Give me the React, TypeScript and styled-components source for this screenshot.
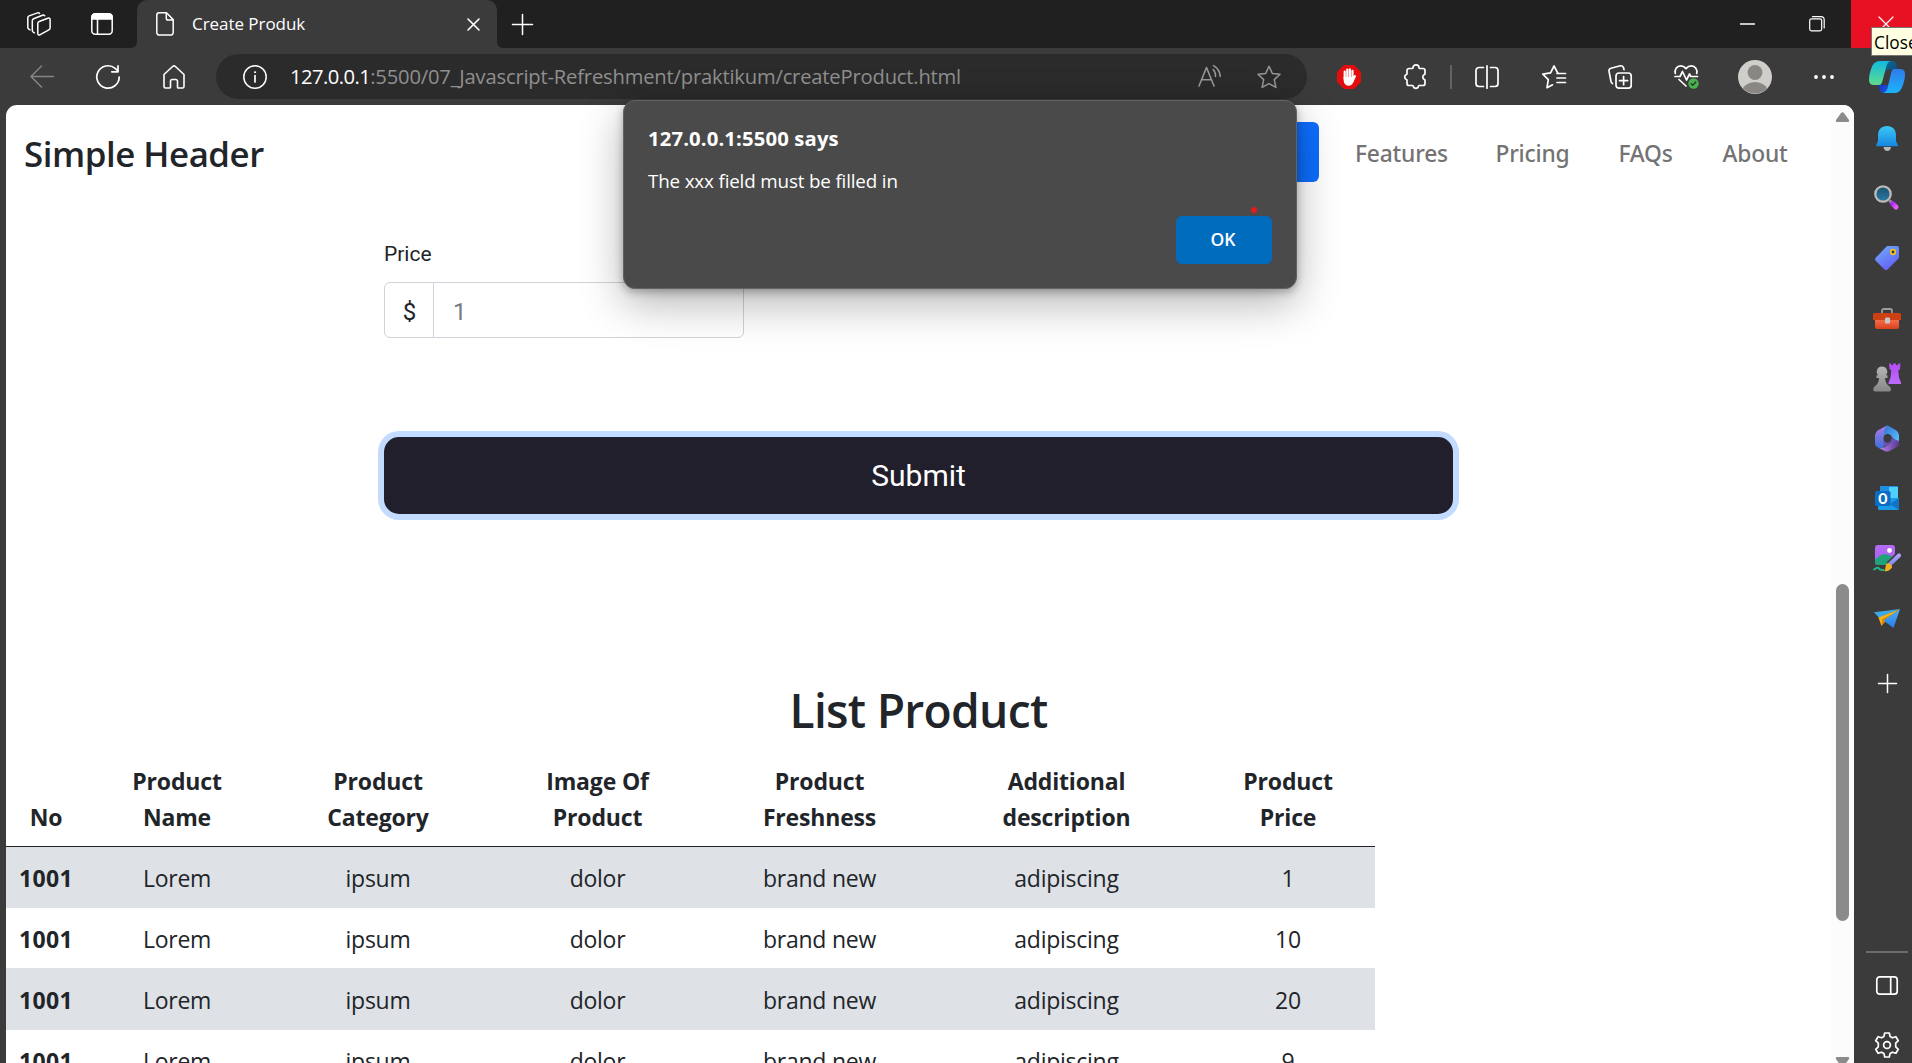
import React from "react";
import styled, { createGlobalStyle } from "styled-components";

const UI = `"Open Sans", "Noto Sans", sans-serif`;
const CHROME = "#3b3b3b";
const STRIP = "#202020";

const GlobalStyle = createGlobalStyle`
  *, *::before, *::after { box-sizing: border-box; }
  html, body { margin: 0; padding: 0; overflow: hidden; }
  body { font-family: ${UI}; background: ${CHROME}; }
  svg { display: block; flex: none; overflow: visible; }
`;

/* ---------- Browser frame ---------- */

const Window = styled.div`
  position: relative;
  display: flex;
  flex-direction: column;
  width: 1912px;
  height: 1063px;
  overflow: hidden;
  background: ${CHROME};
`;

const TabStrip = styled.div`
  display: flex;
  flex: none;
  height: 48px;
`;

const StripLead = styled.div`
  display: flex;
  align-items: center;
  width: 137px;
  padding-left: 27px;
  gap: 40px;
  background: ${STRIP};
  border-bottom-right-radius: 6px;
`;

const TabWell = styled.div`
  width: 360px;
  background: linear-gradient(${STRIP} 50%, ${CHROME} 50%);
`;

const Tab = styled.div`
  display: flex;
  align-items: center;
  height: 48px;
  padding: 0 17px 0 19px;
  border-radius: 10px 10px 0 0;
  background: ${CHROME};
`;

const TabTitle = styled.span`
  flex: 1;
  margin-left: 18px;
  padding-bottom: 2px;
  color: #fff;
  font-size: 17px;
  letter-spacing: -0.05px;
`;

const StripRest = styled.div`
  display: flex;
  flex: 1;
  align-items: center;
  justify-content: space-between;
  padding-left: 15px;
  background: ${STRIP};
  border-bottom-left-radius: 6px;
`;

const WindowControls = styled.div`
  display: flex;
  align-self: stretch;
`;

const ControlButton = styled.div<{ $w: number; $danger?: boolean }>`
  display: flex;
  align-items: center;
  justify-content: center;
  width: ${(p) => p.$w}px;
  padding-left: ${(p) => (p.$danger ? 8 : 0)}px;
  background: ${(p) => (p.$danger ? "#e81123" : "transparent")};
`;

const Tooltip = styled.div`
  position: absolute;
  z-index: 4;
  left: 1871px;
  top: 27px;
  width: 60px;
  height: 29px;
  padding-left: 2px;
  border: 1px solid #767676;
  background: #ffffe1;
  color: #000;
  font-size: 17.3px;
  line-height: 29px;
`;

const Body = styled.div`
  display: flex;
  flex: 1;
  min-height: 0;
`;

const Main = styled.div`
  display: flex;
  flex-direction: column;
  width: 1854px;
`;

const Toolbar = styled.div`
  display: flex;
  flex: none;
  align-items: center;
  height: 57px;
  padding: 0 0 0 9px;
`;

const Slot = styled.div<{ $w?: number; $pad?: number }>`
  display: flex;
  flex: none;
  align-items: center;
  justify-content: center;
  width: ${(p) => p.$w ?? 66}px;
  padding-left: ${(p) => p.$pad ?? 0}px;
`;

const AddressBar = styled.div`
  display: flex;
  align-items: center;
  width: 1091px;
  height: 45px;
  margin: 0 9px;
  padding: 0 26px 0 27px;
  border-radius: 23px;
  background: #2b2b2b;
`;

const Url = styled.div`
  flex: 1;
  margin-left: 23px;
  padding-bottom: 2px;
  color: #8f8f8f;
  font-size: 20.2px;
  letter-spacing: -0.19px;
  white-space: nowrap;
`;

const UrlHost = styled.span`
  color: #fff;
  letter-spacing: -0.55px;
`;

const BarActions = styled.div`
  display: flex;
  align-items: center;
  gap: 35px;
`;

const BarDivider = styled.div`
  flex: none;
  width: 2px;
  height: 24px;
  margin: 0 1px 0 2px;
  background: #636363;
`;

const Sidebar = styled.aside`
  display: flex;
  flex-direction: column;
  width: 58px;
  padding-left: 8px;
`;

const SideItem = styled.div<{ $h?: number; $mt?: number }>`
  display: flex;
  flex: none;
  align-items: center;
  justify-content: center;
  height: ${(p) => p.$h ?? 60}px;
  margin-top: ${(p) => p.$mt ?? 0}px;
`;

const SideRule = styled.div`
  flex: none;
  height: 2px;
  margin: 238px 4px 0 4px;
  background: #6b6b6b;
`;

/* ---------- Web page ---------- */

const Viewport = styled.div`
  display: flex;
  flex: 1;
  min-height: 0;
  margin-left: 6px;
  overflow: hidden;
  border-radius: 11px 11px 0 0;
  background: #fff;
`;

const Page = styled.main`
  display: flex;
  flex-direction: column;
  width: 1825px;
  color: #212529;
`;

const Scrollbar = styled.div`
  display: flex;
  flex-direction: column;
  align-items: center;
  width: 23px;
  padding-top: 7px;
  background: #fcfcfc;
`;

const Thumb = styled.div`
  flex: none;
  width: 13px;
  height: 337px;
  margin: 462px 0 136px;
  border-radius: 7px;
  background: #8b8b8b;
`;

const SiteHeader = styled.header`
  display: flex;
  flex: none;
  align-items: center;
  justify-content: space-between;
  height: 94px;
  padding: 0 18px;
`;

const Brand = styled.span`
  padding-top: 4px;
  font-size: 34.8px;
  font-weight: 600;
  letter-spacing: -0.45px;
  line-height: 54px;
`;

const Nav = styled.nav`
  display: flex;
  height: 60px;
`;

const NavPill = styled.div`
  width: 118px;
  height: 60px;
  margin-right: 13px;
  border-radius: 6px;
  background: #0d6efd;
`;

const NavLink = styled.a<{ $w: number }>`
  width: ${(p) => p.$w}px;
  color: #737373;
  font-family: "Noto Sans", sans-serif;
  font-size: 22.8px;
  font-weight: 500;
  letter-spacing: -0.2px;
  line-height: 64px;
  text-align: center;
`;

const Form = styled.form`
  display: flex;
  flex: none;
  flex-direction: column;
  align-items: flex-start;
  width: 1069px;
  margin: 40px auto 0;
  font-family: Roboto, sans-serif;
`;

const Label = styled.label`
  font-size: 21px;
  line-height: 31px;
`;

const InputGroup = styled.div`
  display: flex;
  width: 360px;
  height: 56px;
  margin-top: 12px;
  border: 1px solid #ced4da;
  border-radius: 6px;
  font-size: 24px;
  line-height: 59px;
`;

const Prefix = styled.span`
  width: 49px;
  padding-left: 1px;
  border-right: 1px solid #ced4da;
  text-align: center;
`;

const FieldValue = styled.span`
  padding-left: 19px;
  color: #757c84;
`;

const Submit = styled.button`
  width: 100%;
  height: 77px;
  margin-top: 99px;
  padding: 0;
  border: 0;
  border-radius: 15px;
  background: #211f2b;
  box-shadow: 0 0 0 6px #c2dbfe;
  color: #fff;
  font-family: Roboto, sans-serif;
  font-size: 30px;
`;

const Heading = styled.h2`
  flex: none;
  margin: 168px 0 11px;
  font-size: 46.2px;
  font-weight: 600;
  letter-spacing: -0.72px;
  line-height: 58px;
  text-align: center;
`;

const Table = styled.table`
  flex: none;
  width: 1369px;
  table-layout: fixed;
  border-collapse: separate;
  border-spacing: 0;
  font-size: 23px;
  line-height: 36px;
  text-align: center;
`;

const HeadCell = styled.th`
  padding: 12px 0 11px;
  border-bottom: 1px solid #212529;
  font-size: 23px;
  font-weight: 700;
  letter-spacing: -0.17px;
  vertical-align: bottom;
`;

const Row = styled.tr<{ $striped: boolean }>`
  height: 61px;
  background: ${(p) => (p.$striped ? "#dee1e6" : "#fff")};
`;

const Cell = styled.td<{ $strong?: boolean }>`
  padding: 2px 0 0;
  border-bottom: 1px solid #dee1e6;
  font-weight: ${(p) => (p.$strong ? 700 : 400)};
  letter-spacing: ${(p) => (p.$strong ? "0.4px" : "-0.25px")};
`;

/* ---------- Alert dialog ---------- */

const Dialog = styled.div`
  position: absolute;
  z-index: 3;
  left: 623px;
  top: 100px;
  display: flex;
  flex-direction: column;
  width: 674px;
  height: 189px;
  padding: 21px 24px 24px;
  border: 1px solid #636363;
  border-radius: 12px;
  background: #4a4a4a;
  box-shadow: 0 14px 44px rgba(0, 0, 0, 0.3), 0 3px 9px rgba(0, 0, 0, 0.28);
  color: #fff;
`;

const DialogTitle = styled.div`
  font-size: 20.3px;
  font-weight: 700;
  letter-spacing: 0.13px;
  line-height: 32px;
`;

const DialogText = styled.div`
  margin-top: 12px;
  font-size: 18.8px;
  letter-spacing: -0.15px;
  line-height: 30px;
`;

const DialogActions = styled.div`
  display: flex;
  justify-content: flex-end;
  margin-top: 20px;
`;

const OkButton = styled.button`
  position: relative;
  width: 96px;
  height: 48px;
  padding: 0 2px 2px 0;
  border: 0;
  border-radius: 6px;
  background: #006cbe;
  color: #fff;
  font-family: ${UI};
  font-size: 17.5px;
  font-weight: 600;
`;

const RecordDot = styled.i`
  position: absolute;
  left: 75px;
  top: -9px;
  width: 6px;
  height: 6px;
  border-radius: 50%;
  background: #e21b1b;
`;

/* ---------- Icons ---------- */

type IconProps = { w?: number; h?: number; color?: string; sw?: number; children: React.ReactNode };

const Line = ({ w = 24, h = 24, color = "#fff", sw = 1.5, children }: IconProps) => (
  <svg width={w} height={h} viewBox={`0 0 ${w} ${h}`} fill="none" stroke={color} strokeWidth={sw} strokeLinecap="round" strokeLinejoin="round">
    {children}
  </svg>
);

const Art = ({ w = 24, h = 24, children }: IconProps) => (
  <svg width={w} height={h} viewBox={`0 0 ${w} ${h}`}>
    {children}
  </svg>
);

const Grad = ({ id, from, to, x2 = "0", y2 = "1" }: { id: string; from: string; to: string; x2?: string; y2?: string }) => (
  <linearGradient id={id} x1="0" y1="0" x2={x2} y2={y2}>
    <stop offset="0" stopColor={from} />
    <stop offset="1" stopColor={to} />
  </linearGradient>
);

const WorkspacesIcon = () => (
  <Line>
    <path d="M12.2 9.500 20.800 6.200a1.500 1.500 0 0 1 2.300 1.500v8.200a2 2 0 0 1-1.300 1.900l-8.600 4.900a1.500 1.500 0 0 1-2.400-1.400v-9.900a2 2 0 0 1 1.400-1.900Z" />
    <path d="M7.400 20.800 6.300 20.200a2 2 0 0 1-1-1.800V8.700A2 2 0 0 1 6.600 6.800L15.500 3.200q1.300-.4 2.200.6" />
    <path d="M3 17.800 1.800 17.100a2 2 0 0 1-1-1.700V5.800A2 2 0 0 1 2.100 3.900L10.500.9q1.300-.4 2 .5" />
  </Line>
);

const VerticalTabsIcon = () => (
  <Line w={22} h={22}>
    <rect x="0.8" y="0.800" width="20.400" height="20.400" rx="3.500" />
    <path d="M1 6V4a3 3 0 0 1 3-3h14a3 3 0 0 1 3 3v2Z" fill="#fff" />
    <path d="M6.500 6v15" />
  </Line>
);

const DocIcon = () => (
  <Line w={18}>
    <path d="M3.300.8h7.200l6.700 6.800v13a2.500 2.500 0 0 1-2.500 2.500H3.300A2.500 2.500 0 0 1 .8 20.600V3.300A2.500 2.500 0 0 1 3.300.8Z" />
    <path d="M10.300 1v5.200a1.800 1.800 0 0 0 1.800 1.800H17" />
  </Line>
);

const CrossIcon = ({ s = 13, sw = 1.6 }: { s?: number; sw?: number }) => (
  <Line w={s} h={s} sw={sw}>
    <path d={`M1 1 ${s - 1} ${s - 1}M${s - 1} 1 1 ${s - 1}`} />
  </Line>
);

const PlusIcon = ({ s = 20, sw = 1.5 }: { s?: number; sw?: number }) => (
  <Line w={s} h={s} sw={sw}>
    <path d={`M${s / 2} .5V${s - 0.5}M.5 ${s / 2}H${s - 0.5}`} />
  </Line>
);

const BackIcon = () => (
  <Line color="#858585">
    <path d="M23.500 11.500H1M11.500 1 1 11.500 11.500 22" />
  </Line>
);

const ReloadIcon = () => (
  <Line sw={1.700}>
    <path d="M23.200 12a11.200 11.200 0 1 1-4-8.600L22 6.200" />
    <path d="M22 .8v6h-6.200" />
  </Line>
);

const HomeIcon = () => (
  <Line w={22} sw={1.600}>
    <path d="M1 9.500 9.600 1.500a2 2 0 0 1 2.800 0L21 9.500v12a1.500 1.500 0 0 1-1.500 1.500h-4.300a.7.7 0 0 1-.7-.7v-6a1.800 1.800 0 0 0-1.800-1.800h-3.400a1.800 1.800 0 0 0-1.800 1.800v6a.7.7 0 0 1-.7.7H2.500A1.500 1.500 0 0 1 1 21.500Z" />
  </Line>
);

const InfoIcon = () => (
  <Line>
    <circle cx="12" cy="12" r="11.200" />
    <path d="M12 10.500V17" strokeWidth="1.700" />
    <circle cx="12" cy="7.200" r="0.600" fill="#fff" strokeWidth="1" />
  </Line>
);

const ReadAloudIcon = () => (
  <Line color="#979797" sw={1.600}>
    <path d="M1 21 8.500 2.500 16 21M3.800 14.800h9.400" />
    <path d="M15.200 4.500a9 9 0 0 1 2.300 7M15.500.6a13 13 0 0 1 6.700 10.900" />
  </Line>
);

const STAR = "M12 1.200 15.300 8.400 23 9.300 17.300 14.600 18.900 22.400 12 18.600 5.100 22.400 6.700 14.600 1 9.300 8.700 8.400Z";

const StarIcon = () => (
  <Line color="#979797">
    <path d={STAR} />
  </Line>
);

const BlockerIcon = () => (
  <Art>
    <path d="M7 0h10l7 7v10l-7 7H7l-7-7V7Z" fill="#e40d0d" />
    <g stroke="#fff" strokeWidth="2.200" strokeLinecap="round" fill="none">
      <path d="M7.700 6.500V14M10.300 4.500V13M12.900 4.400V13M15.500 5.800V14M17.900 11.200 15.500 16" />
    </g>
    <path d="M6.600 12h10l.6 3q-1.500 5.700-5.200 5.700-4.600 0-5.300-4.700Z" fill="#fff" />
  </Art>
);

const PuzzleIcon = () => (
  <Line w={22} h={25} sw={1.700}>
    <path d="M5 4.500h3.300q.6 0 .7-.7a3 3 0 0 1 6 0q.1.700.7.7h3.300a2 2 0 0 1 2 2v3.200q0 .7-.7.700a3 3 0 0 0 0 5.200q.7 0 .7.700v3.200a2 2 0 0 1-2 2h-3.800q-.6 0-.7.700a2.700 2.700 0 0 1-5.300 0q-.1-.7-.7-.7H5a2 2 0 0 1-2-2v-3.200q0-.7-.6-.8a2.700 2.700 0 0 1 0-5q.6-.1.600-.8V6.500a2 2 0 0 1 2-2Z" />
  </Line>
);

const SplitIcon = () => (
  <Line sw={1.700}>
    <path d="M8.500 2.500H4A3 3 0 0 0 1 5.500v13a3 3 0 0 0 3 3h4.500M15.500 2.500H20a3 3 0 0 1 3 3v13a3 3 0 0 1-3 3h-4.500M12 .8v22.400" />
  </Line>
);

const FavoritesIcon = () => (
  <Line sw={1.700}>
    <path d="M15.800 8.200 12 1 8.600 7.900.8 9.200 6.300 14.600 5 22.700l5.500-2.900" />
    <path d="M15 8.500h8.500M15 13h8.500M15 17.500h8.500" />
  </Line>
);

const CollectionsIcon = () => (
  <Line sw={1.700}>
    <rect x="8" y="8" width="15.200" height="15.200" rx="3" />
    <path d="M15.600 11.500v8.200M11.500 15.600h8.200M4.500 18.500Q3.400 18 3 16.500L1 6.200Q.7 3.800 3 3.200L12.300.8q2.300-.3 3.200 1.800l.5 2" />
  </Line>
);

const EssentialsIcon = () => (
  <Line w={25} h={25} sw={1.700}>
    <path d="M1.300 9.500C.3 5.500 2.800 1.800 6.600 1.800q3.200 0 5.400 2.800 2.200-2.800 5.400-2.800c3.800 0 6.300 3.700 5.300 7.700" />
    <path d="M1 12.500h5l2.500-5 4 8.500 3-6 1.300 2.500h6.700M5 15.500l7 6.500" />
    <circle cx="19.500" cy="19.500" r="5.200" fill="#4caf50" stroke="none" />
    <path d="m17.200 19.800 1.600 1.500 3-3.300" stroke="#1f3d20" strokeWidth="1.300" />
  </Line>
);

const Avatar = () => (
  <Art w={34} h={34}>
    <clipPath id="avatarClip"><circle cx="17" cy="17" r="16.500" /></clipPath>
    <circle cx="17" cy="17" r="17" fill="#d0cecb" />
    <circle cx="17" cy="12.500" r="7.400" fill="#8a8683" />
    <ellipse cx="17" cy="32" rx="13" ry="10" fill="#8a8683" clipPath="url(#avatarClip)" />
  </Art>
);

const DotsIcon = () => (
  <Art w={20} h={4}>
    <circle cx="2" cy="2" r="1.900" fill="#fff" />
    <circle cx="10" cy="2" r="1.900" fill="#fff" />
    <circle cx="18" cy="2" r="1.900" fill="#fff" />
  </Art>
);

const RestoreIcon = () => (
  <Line w={16} h={16} sw={1.200}>
    <rect x="0.700" y="2.800" width="12" height="12" rx="1.800" />
    <path d="M3.500.7H12a3.200 3.200 0 0 1 3.200 3.200v8" />
  </Line>
);

const CopilotIcon = () => (
  <Art w={36} h={32}>
    <defs>
      <Grad id="copA" from="#12b9e0" to="#5fdc8c" />
      <Grad id="copB" from="#2f7bea" to="#1cb4fd" />
      <Grad id="copC" from="#0a6d94" to="#0c4a7c" x2="1" />
      <Grad id="copD" from="#1735c9" to="#1d56e0" x2="1" />
    </defs>
    <path d="M16 0h7.500q3 .3 4 4l1 4.500H22Q18 7.500 17 11Z" fill="url(#copC)" />
    <path d="M9 24h10l-1.500 6q-1 2-3 2-3 0-4-4.500Z" fill="url(#copD)" />
    <path d="M11 0h10.500Q18.500 1 17.500 5l-4.500 16.500q-.8 2.500-3.500 2.500H5Q0 24 0 19 0 12 3.500 4.500 6 0 11 0Z" fill="url(#copA)" />
    <path d="M25 8h6q5 0 5 5 0 7-3.500 14.500Q30 32 25.500 32H14.500q3-1 4-5L22.500 10.500Q23 8 25 8Z" fill="url(#copB)" />
  </Art>
);

const BellIcon = () => (
  <Art w={22} h={25}>
    <defs><Grad id="bell" from="#3cc8f6" to="#1687e0" /></defs>
    <path d="M7.500 21h7.500q-.5 4-3.700 4T7.500 21Z" fill="#b9b9b9" />
    <path d="M11 0c5.500 0 9 3.800 9 9v6l2 4.500q.2.700-.5.700H.5q-.7 0-.5-.7L2 15V9c0-5.200 3.500-9 9-9Z" fill="url(#bell)" />
  </Art>
);

const SearchIcon = () => (
  <Art w={27} h={27}>
    <defs>
      <Grad id="lens" from="#1b516f" to="#2a7ba5" />
      <Grad id="handle" from="#a72df0" to="#e95cfb" x2="1" />
    </defs>
    <path d="m15.500 15.500 2.500 2.500" stroke="#9a9a9a" strokeWidth="3" />
    <path d="m18.500 18.500 3.500 3.500" stroke="url(#handle)" strokeWidth="5" strokeLinecap="round" />
    <circle cx="9" cy="9" r="7.700" fill="url(#lens)" stroke="#bdbab7" strokeWidth="2.300" />
  </Art>
);

const TagIcon = () => (
  <Art>
    <defs><Grad id="tag" from="#6fb0fb" to="#6560f5" x2=".6" /></defs>
    <path d="M13 0h9q2 0 2 2v9q0 1-.7 1.700L12.500 23.500q-1.500 1.200-3 0L.7 14.800q-1.300-1.500 0-3L11.500.6Q12 0 13 0Z" fill="url(#tag)" />
    <circle cx="18" cy="6" r="2.300" fill="#3a3560" stroke="#f2c511" strokeWidth="1.700" />
  </Art>
);

const BriefcaseIcon = () => (
  <Art w={28} h={21}>
    <defs><Grad id="caseBody" from="#f9724f" to="#d9421c" /></defs>
    <path d="M9 6V3q0-2 2-2h6q2 0 2 2v3" fill="none" stroke="#9d9d9d" strokeWidth="1.800" />
    <path d="M2 11h24v8q0 2-2 2H4q-2 0-2-2Z" fill="url(#caseBody)" />
    <path d="M1.500 5h25q1.500 0 1.500 1.500V12H0V6.500Q0 5 1.500 5Z" fill="#cd4013" />
    <rect x="12" y="9.500" width="5" height="6" rx="1.200" fill="#c6c9cc" />
  </Art>
);

const ChessIcon = () => (
  <Art w={28} h={30}>
    <defs>
      <Grad id="rook" from="#b34cf5" to="#bb6cf8" />
      <Grad id="pawn" from="#b5b5b5" to="#878787" />
    </defs>
    <path d="M16 .5h2V2h2V.5h3V2h2V.5h2.500l-.5 5.500-1.700 1.500.7 7L28 19.500v1.500H15.500v-1.500l2-5 .8-7L16.600 6Z" fill="url(#rook)" />
    <path d="M9 3.500a5.200 5.200 0 0 1 3.800 8.800h1.700v2.700H12q.2 5 3.300 7.500 2.700 1.500 2.700 3.800 0 2.200-2 2.200H2.200Q.2 28.500.2 26.300q0-2.300 2.600-3.800Q6 20 6 15H3.500v-2.700h1.700A5.200 5.200 0 0 1 9 3.500Z" fill="url(#pawn)" />
  </Art>
);

const M365Icon = () => (
  <Art h={27}>
    <defs>
      <Grad id="mA" from="#b07be8" to="#3b6fd8" />
      <Grad id="mB" from="#2d6fd4" to="#5bc7f8" x2="1" />
      <Grad id="mC" from="#c187ee" to="#54378f" x2="1" y2="0" />
    </defs>
    <path d="M12.500.2 3 5.200Q0 7 0 10v8q0 3 3 4.500l3 1.500q3 0 3-3V9q0-3 2-5Z" fill="url(#mA)" />
    <path d="M12.500.2 21 5.200Q24 7 24 10v7q-1 0-4-2.500L15.500 12 8.500 10.500Q8.500 3.500 12.500.2Z" fill="url(#mB)" />
    <path d="M24 16v2q0 3-3 4.500L14 26.300q-2 .9-4 0L4 23q3 1 6-1l6.500-4.500Q21 14 24 16Z" fill="url(#mC)" />
    <path d="M16 10.500 20 14.700 24 16.800 24 17.500Q20 15.500 16 18.500L8.500 22V15Z" fill="#6a51b8" />
    <path d="m9.500 10 3-1.200 3.200 1.300 1.100 3.200-1.300 3.200-3 1.400-3-1.400-1.100-3Z" fill="#3b3b3b" />
  </Art>
);

const OutlookGlyph = styled.text`
  fill: #fff;
  font-family: Roboto, sans-serif;
  font-size: 14px;
  font-weight: 700;
`;

const OutlookIcon = () => (
  <Art>
    <rect x="5" y="0" width="18" height="12" rx="1" fill="#1e8fe0" />
    <rect x="14" y="1" width="9" height="11" fill="#50d0fa" />
    <path d="M3 12h21v10.500q0 1.500-1.500 1.500h-18Q3 24 3 22.500Z" fill="#1a9be8" />
    <path d="m24 12-9 6 9 6Z" fill="#1273c4" />
    <rect x="0" y="5" width="15.500" height="15" rx="1.500" fill="#0a6cc4" />
    <OutlookGlyph x="2.900" y="17.500">O</OutlookGlyph>
  </Art>
);

const ImageIcon = () => (
  <Art w={28} h={27}>
    <defs>
      <Grad id="pic" from="#b66af5" to="#a860ee" />
      <Grad id="brush" from="#a9a0f8" to="#7d8df0" />
    </defs>
    <rect x="2" y="0" width="20" height="20" rx="3" fill="url(#pic)" />
    <path d="M2 15q5-6 10-6 5 .5 8 4l-6 7H5q-3 0-3-3Z" fill="#1fa37a" />
    <circle cx="16.500" cy="5.500" r="2.400" fill="#fff" />
    <path d="m16 20 9.500-9.500" stroke="#3b3b3b" strokeWidth="7" />
    <path d="m17 19 9-8.500" stroke="url(#brush)" strokeWidth="4.200" strokeLinecap="round" />
    <path d="M15 18q4 .5 4 4.500-3 4.500-8 3.500 1.500-1 1.500-4 .5-3.500 2.500-4Z" fill="#f5b022" />
    <path d="M1 24.500q4-3 5-1t4.500 1.500" fill="none" stroke="#22b58a" strokeWidth="2" strokeLinecap="round" />
  </Art>
);

const PlaneIcon = () => (
  <Art w={27} h={19}>
    <defs><Grad id="plane" from="#4eb3f8" to="#2a7ae8" /></defs>
    <path d="M26 0 0 3.200l5 5.500Z" fill="#3ba9e8" />
    <path d="M26 0 4.500 8.500 7.500 17l3.200-6Z" fill="#f8b411" />
    <path d="M7.500 17 8.200 10 18 5Z" fill="#d88a06" />
    <path d="M26 0 9.500 11.500 19.500 19Z" fill="url(#plane)" />
  </Art>
);

const PanelIcon = () => (
  <Line w={22} h={19} sw={1.700}>
    <rect x="0.800" y="0.800" width="20.400" height="17.400" rx="3" />
    <path d="M14.700 1v17" />
  </Line>
);

const GearIcon = () => (
  <Line w={26} h={26} sw={1.700}>
    <circle cx="13" cy="13" r="3.400" />
    <path d="M10.700 1h4.600l.8 3.500 2.300 1.300 3.500-1.100 2.400 4-2.600 2.500v3.600l2.600 2.500-2.400 4-3.500-1.100-2.300 1.300-.8 3.500h-4.600l-.8-3.500-2.300-1.300-3.500 1.100-2.400-4 2.600-2.500v-3.600L1.700 8.700l2.400-4 3.500 1.100 2.300-1.300Z" />
  </Line>
);

const ArrowUp = () => (
  <Art w={15} h={10}>
    <path d="M6 .9q1.500-1.300 3 0l5 7.200q.8 1.900-1 1.900H2Q.2 10 1 8.100Z" fill="#8b8b8b" />
  </Art>
);

const ArrowDown = () => (
  <Art w={15} h={10}>
    <path d="M6 9.100q1.500 1.300 3 0l5-7.200q.8-1.900-1-1.900H2Q.2 0 1 1.900Z" fill="#8b8b8b" />
  </Art>
);

/* ---------- Data ---------- */

const columns = [
  { label: ["No"], width: 80 },
  { label: ["Product", "Name"], width: 182 },
  { label: ["Product", "Category"], width: 220 },
  { label: ["Image Of", "Product"], width: 219 },
  { label: ["Product", "Freshness"], width: 225 },
  { label: ["Additional", "description"], width: 269 },
  { label: ["Product", "Price"], width: 174 },
];

const prices = [1, 10, 20, 9];

const sideApps = [BellIcon, SearchIcon, TagIcon, BriefcaseIcon, ChessIcon, M365Icon, OutlookIcon, ImageIcon, PlaneIcon];

const navLinks: [string, number][] = [["Features", 139], ["Pricing", 123], ["FAQs", 103], ["About", 116]];

export default function App() {
  return (
    <Window>
      <GlobalStyle />
      <TabStrip>
        <StripLead>
          <WorkspacesIcon />
          <VerticalTabsIcon />
        </StripLead>
        <TabWell>
          <Tab>
            <DocIcon />
            <TabTitle>Create Produk</TabTitle>
            <CrossIcon />
          </Tab>
        </TabWell>
        <StripRest>
          <PlusIcon s={21} />
          <WindowControls>
            <ControlButton $w={69}>
              <Line w={15} h={2} sw={1.300}><path d="M.5 1h14" /></Line>
            </ControlButton>
            <ControlButton $w={69}><RestoreIcon /></ControlButton>
            <ControlButton $w={61} $danger>
              <CrossIcon s={16} sw={1.200} />
            </ControlButton>
          </WindowControls>
        </StripRest>
      </TabStrip>
      <Tooltip>Close</Tooltip>

      <Body>
        <Main>
          <Toolbar>
            <Slot><BackIcon /></Slot>
            <Slot><ReloadIcon /></Slot>
            <Slot><HomeIcon /></Slot>
            <AddressBar>
              <InfoIcon />
              <Url><UrlHost>127.0.0.1</UrlHost>:5500/07_Javascript-Refreshment/praktikum/createProduct.html</Url>
              <BarActions>
                <ReadAloudIcon />
                <StarIcon />
              </BarActions>
            </AddressBar>
            <Slot><BlockerIcon /></Slot>
            <Slot><PuzzleIcon /></Slot>
            <BarDivider />
            <Slot $w={68}><SplitIcon /></Slot>
            <Slot $w={66}><FavoritesIcon /></Slot>
            <Slot><CollectionsIcon /></Slot>
            <Slot><EssentialsIcon /></Slot>
            <Slot $w={72}><Avatar /></Slot>
            <Slot $w={62} $pad={3}><DotsIcon /></Slot>
          </Toolbar>

          <Viewport>
            <Page>
              <SiteHeader>
                <Brand>Simple Header</Brand>
                <Nav>
                  <NavPill />
                  {navLinks.map(([label, w]) => <NavLink key={label} $w={w}>{label}</NavLink>)}
                </Nav>
              </SiteHeader>
              <Form>
                <Label>Price</Label>
                <InputGroup>
                  <Prefix>$</Prefix>
                  <FieldValue>1</FieldValue>
                </InputGroup>
                <Submit type="button">Submit</Submit>
              </Form>
              <Heading>List Product</Heading>
              <Table>
                <colgroup>
                  {columns.map((c, i) => <col key={i} width={c.width} />)}
                </colgroup>
                <thead>
                  <tr>
                    {columns.map((c, i) => (
                      <HeadCell key={i}>
                        {c.label[0]}
                        {c.label[1] && <><br />{c.label[1]}</>}
                      </HeadCell>
                    ))}
                  </tr>
                </thead>
                <tbody>
                  {prices.map((price, i) => (
                    <Row key={price} $striped={i % 2 === 0}>
                      <Cell $strong>1001</Cell>
                      <Cell>Lorem</Cell>
                      <Cell>ipsum</Cell>
                      <Cell>dolor</Cell>
                      <Cell>brand new</Cell>
                      <Cell>adipiscing</Cell>
                      <Cell>{price}</Cell>
                    </Row>
                  ))}
                </tbody>
              </Table>
            </Page>
            <Scrollbar>
              <ArrowUp />
              <Thumb />
              <ArrowDown />
            </Scrollbar>
          </Viewport>
        </Main>

        <Sidebar>
          <SideItem $h={58}><CopilotIcon /></SideItem>
          {sideApps.map((AppIcon, i) => (
            <SideItem key={i} $mt={i === 0 ? 2 : 0}><AppIcon /></SideItem>
          ))}
          <SideItem $mt={5}><PlusIcon s={19} /></SideItem>
          <SideRule />
          <SideItem $h={40} $mt={12}><PanelIcon /></SideItem>
          <SideItem $h={40} $mt={20}><GearIcon /></SideItem>
        </Sidebar>
      </Body>

      <Dialog>
        <DialogTitle>127.0.0.1:5500 says</DialogTitle>
        <DialogText>The xxx field must be filled in</DialogText>
        <DialogActions>
          <OkButton type="button">OK<RecordDot /></OkButton>
        </DialogActions>
      </Dialog>
    </Window>
  );
}
